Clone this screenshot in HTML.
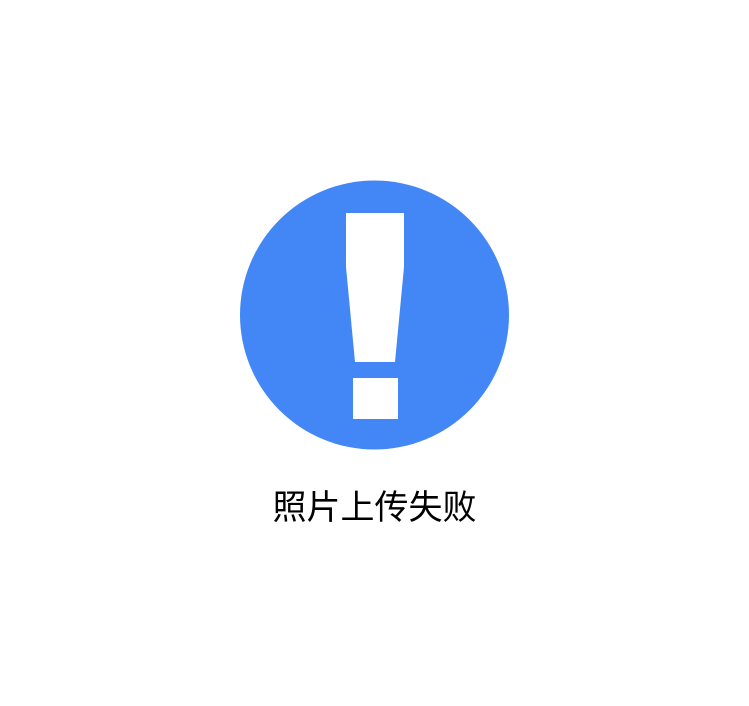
<!DOCTYPE html>
<html><head><meta charset="utf-8"><style>
html,body{margin:0;padding:0;background:#fff;width:749px;height:706px;overflow:hidden}
.t{position:absolute;left:0;width:749px;top:486px;text-align:center;font:34px/44px "Liberation Sans","Noto Sans CJK SC",sans-serif;color:#000}
</style></head><body>
<svg width="749" height="706" style="position:absolute;left:0;top:0">
<circle cx="374.5" cy="315" r="134.5" fill="#4387f6"/>
<polygon points="346,213 404,213 404,267 395,362 355,362 346,267" fill="#fff"/>
<rect x="353" y="378" width="45" height="41" fill="#fff"/>
</svg>
<div class="t">照片上传失败</div>
</body></html>
